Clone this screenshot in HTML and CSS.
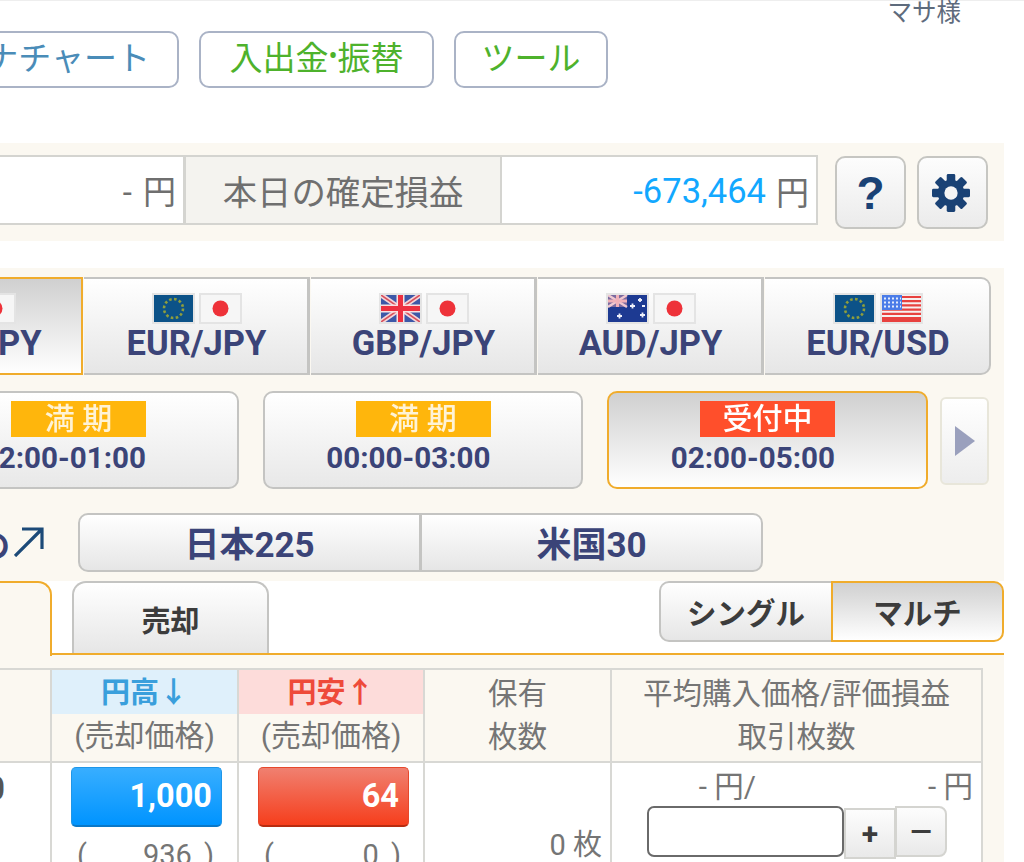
FILE: index.html
```html
<!DOCTYPE html>
<html lang="ja">
<head>
<meta charset="utf-8">
<title>取引</title>
<link rel="stylesheet" href="styles.css">
</head>
<body>
<svg class="sprite" aria-hidden="true">
  <symbol id="eu" viewBox="0 0 39 27">
    <rect width="39" height="27" fill="#0c5288"/>
    <circle cx="19.5" cy="13.5" r="9.5" fill="none" stroke="#8f9e3c" stroke-width="2.6" stroke-dasharray="2.6 2.4"/>
  </symbol>
  <symbol id="jp" viewBox="0 0 39 27">
    <rect width="39" height="27" fill="#f6f6f6"/>
    <circle cx="19.5" cy="13.5" r="8" fill="#ee3239"/>
  </symbol>
  <symbol id="uk" viewBox="0 0 39 27">
    <rect width="39" height="27" fill="#3d58a8"/>
    <path d="M0 0L39 27M39 0L0 27" stroke="#f4d5d8" stroke-width="5"/>
    <path d="M0 0L39 27M39 0L0 27" stroke="#d8505c" stroke-width="1.6"/>
    <path d="M19.5 0V27M0 13.5H39" stroke="#f8e0e0" stroke-width="8"/>
    <path d="M19.5 0V27M0 13.5H39" stroke="#ee3040" stroke-width="5"/>
  </symbol>
  <symbol id="au" viewBox="0 0 39 27">
    <rect width="39" height="27" fill="#1d3a92"/>
    <rect width="19" height="12" fill="#7a6aa0"/>
    <path d="M0 0L19 12M19 0L0 12" stroke="#f0c8d0" stroke-width="2.4"/>
    <path d="M9.5 0V12M0 6H19" stroke="#f0b0b8" stroke-width="3"/>
    <path d="M9 21h5M11.500 18.500v5M22 11h5M24.500 8.500v5M30 5h4M32 3v4M32 20h5M34.500 17.500v5M34 11h3" stroke="#eef0fa" stroke-width="1.800"/>
  </symbol>
  <symbol id="us" viewBox="0 0 39 27">
    <rect width="39" height="27" fill="#f6f0f0"/>
    <path d="M0 2H39M0 6.200H39M0 10.400H39M0 14.600H39M0 18.800H39M0 23H39" stroke="#e8413f" stroke-width="2.200"/>
    <path d="M0 25.500H39" stroke="#e8413f" stroke-width="3"/>
    <rect width="20" height="15" fill="#4a7ce8"/>
    <path d="M2 3.500H19M2 7.500H19M2 11.500H19" stroke="#e4ecfb" stroke-width="2" stroke-dasharray="2 2"/>
  </symbol>
</svg>

<div class="page">
  <header class="top">
    <div class="user">マサ様</div>
    <nav class="nav">
      <a class="nav-btn nav-chart">ナチャート</a>
      <a class="nav-btn nav-fund">入出金<span class="dot">•</span>振替</a>
      <a class="nav-btn nav-tool">ツール</a>
    </nav>
  </header>

  <section class="summary">
    <div class="stat stat-left">- 円</div>
    <div class="stat stat-label">本日の確定損益</div>
    <div class="stat stat-value"><span class="loss">-673,464</span> 円</div>
    <button class="tool-btn help">?</button>
    <button class="tool-btn">
      <svg class="gear" viewBox="0 0 40 40" aria-hidden="true">
        <g fill="#1a4275">
          <rect x="15.500" y="0" width="9" height="40" rx="1.500"/>
          <rect x="15.500" y="0" width="9" height="40" rx="1.500" transform="rotate(45 20 20)"/>
          <rect x="15.500" y="0" width="9" height="40" rx="1.500" transform="rotate(90 20 20)"/>
          <rect x="15.500" y="0" width="9" height="40" rx="1.500" transform="rotate(135 20 20)"/>
        </g>
        <circle cx="20" cy="20" r="10.500" fill="none" stroke="#1a4275" stroke-width="7"/>
        <circle cx="20" cy="20" r="7" fill="#f5f5f5"/>
      </svg>
    </button>
  </section>

  <section class="market">
    <div class="pairs">
      <div class="pair pair-on">
        <div class="flags"><svg class="flag"><use href="#us"/></svg><svg class="flag"><use href="#jp"/></svg></div>
        <div class="pair-name">USD/JPY</div>
      </div>
      <div class="pair">
        <div class="flags"><svg class="flag"><use href="#eu"/></svg><svg class="flag"><use href="#jp"/></svg></div>
        <div class="pair-name">EUR/JPY</div>
      </div>
      <div class="pair">
        <div class="flags"><svg class="flag"><use href="#uk"/></svg><svg class="flag"><use href="#jp"/></svg></div>
        <div class="pair-name">GBP/JPY</div>
      </div>
      <div class="pair">
        <div class="flags"><svg class="flag"><use href="#au"/></svg><svg class="flag"><use href="#jp"/></svg></div>
        <div class="pair-name">AUD/JPY</div>
      </div>
      <div class="pair pair-last">
        <div class="flags"><svg class="flag"><use href="#eu"/></svg><svg class="flag"><use href="#us"/></svg></div>
        <div class="pair-name">EUR/USD</div>
      </div>
    </div>

    <div class="slots">
      <div class="slot">
        <div class="badge badge-full">満 期</div>
        <div class="slot-time">22:00-01:00</div>
      </div>
      <div class="slot slot-mid">
        <div class="badge badge-full">満 期</div>
        <div class="slot-time">00:00-03:00</div>
      </div>
      <div class="slot slot-on">
        <div class="badge badge-open">受付中</div>
        <div class="slot-time">02:00-05:00</div>
      </div>
      <button class="next" aria-label="次へ">
        <svg class="next-icon" viewBox="0 0 20 30" aria-hidden="true"><polygon points="0,0 20,15 0,30" fill="#9aa0bd"/></svg>
      </button>
    </div>

    <div class="indexes">
      <div class="link">
        <span class="link-text">の</span>
        <svg class="link-arrow" viewBox="0 0 30 30" aria-hidden="true"><path d="M1 29L28 2M8 2H28V22" fill="none" stroke="#1c4a78" stroke-width="3.200"/></svg>
      </div>
      <div class="index">日本225</div>
      <div class="index index-last">米国30</div>
    </div>
  </section>

  <section class="tabs">
    <div class="tab-on"></div>
    <div class="tab">売却</div>
    <div class="modes">
      <div class="mode">シングル</div>
      <div class="mode mode-on">マルチ</div>
    </div>
  </section>

  <section class="panel">
    <div class="grid">
      <div class="head head-first"></div>
      <div class="head head-price">
        <div class="dir dir-up">円高↓</div>
        <div class="sub">(売却価格)</div>
      </div>
      <div class="head head-price">
        <div class="dir dir-down">円安↑</div>
        <div class="sub">(売却価格)</div>
      </div>
      <div class="head head-text">保有<br>枚数</div>
      <div class="head head-text">平均購入価格/評価損益<br>取引枚数</div>

      <div class="cell cell-first">0</div>
      <div class="cell cell-price">
        <div class="price price-blue">1,000</div>
        <div class="paren"><span>(</span><span class="paren-val">936</span><span>)</span></div>
      </div>
      <div class="cell cell-price">
        <div class="price price-red">64</div>
        <div class="paren"><span>(</span><span class="paren-val">0</span><span>)</span></div>
      </div>
      <div class="cell cell-qty">0 枚</div>
      <div class="cell cell-order">
        <div class="avg"><span class="avg-price">- 円/</span><span class="avg-pl">- 円</span></div>
        <div class="order">
          <div class="qty-input"></div>
          <button class="step step-plus">+</button>
          <button class="step step-minus">—</button>
        </div>
      </div>
    </div>
  </section>
</div>
</body>
</html>
```

FILE: styles.css
```css
* { box-sizing: border-box; }

html, body {
  margin: 0;
  padding: 0;
  background: #fff;
}

body {
  width: 1024px;
  height: 862px;
  overflow: hidden;
  font-family: Roboto, "Noto Sans CJK JP", sans-serif;
  color: #6f6f6f;
}

.sprite { display: none; }

.page { width: 1024px; }

button { font-family: inherit; padding: 0; }

/* header */
.top {
  height: 143px;
  border-top: 1px solid #eeeeee;
}

.user {
  height: 25px;
  padding-right: 63px;
  text-align: right;
  font-size: 24.500px;
  line-height: 24px;
  color: #5e6b7c;
}

.nav {
  display: flex;
  gap: 20px;
  margin: 5px 0 0 -20px;
}

.nav-btn {
  display: flex;
  align-items: center;
  justify-content: center;
  height: 57px;
  padding-bottom: 7px;
  border: 2px solid #aab3c6;
  border-radius: 10px;
  background: #fff;
  font-size: 33px;
  color: #4eb22c;
}

.nav-chart {
  width: 199px;
  justify-content: flex-end;
  padding-right: 27px;
  color: #4a8cb8;
}

.nav-fund { width: 235px; }
.nav-tool { width: 154px; }

.dot { font-family: Roboto, sans-serif; font-size: 27px; }

/* summary */
.summary {
  display: flex;
  align-items: flex-start;
  width: 1004px;
  height: 98px;
  padding-top: 12px;
  background: #fbf8f1;
}

.stat {
  display: flex;
  align-items: center;
  height: 70px;
  border: 2px solid #d4d4d0;
  font-size: 33px;
  color: #6f6f6f;
}

.stat-left {
  width: 206px;
  margin-left: -20px;
  justify-content: flex-end;
  padding-right: 7px;
  background: #fff;
  border-right-width: 3px;
  word-spacing: 3px;
}

.stat-label {
  width: 316px;
  justify-content: center;
  background: #f4f3ef;
  border-left: 0;
  font-size: 34.400px;
}

.stat-value {
  width: 316px;
  justify-content: flex-end;
  gap: 10px;
  padding: 2px 7px 0 0;
  background: #fff;
  border-left: 0;
}

.loss { color: #12a8ff; font-size: 34.500px; }

.tool-btn {
  display: flex;
  align-items: center;
  justify-content: center;
  width: 71px;
  height: 73px;
  margin: 1px 0 0 11px;
  border: 2px solid #c6c6c2;
  border-radius: 10px;
  background: linear-gradient(#fdfdfd, #ebebeb);
}

.help {
  margin-left: 17px;
  font-family: "Liberation Sans", sans-serif;
  font-size: 46px;
  font-weight: 700;
  color: #1a4275;
}

.gear { width: 38px; height: 38px; margin-right: 3px; filter: blur(0.6px); }

/* market */
.market {
  width: 1004px;
  height: 313px;
  margin-top: 27px;
  padding-top: 9px;
  background: #fbf8f1;
}

.pairs {
  display: flex;
  margin-left: -142px;
}

.pair {
  width: 226px;
  height: 98px;
  margin-left: 1px;
  padding: 14px 0 0 2px;
  border: 2px solid #c4c4c2;
  border-left-width: 0;
  background: linear-gradient(#ffffff, #e6e6e6);
  text-align: center;
}

.pair-on {
  width: 225px;
  margin-left: 0;
  background: linear-gradient(#d0d0d0, #ffffff);
  border-color: #f0ac2c;
}

.pair:not(.pair-on):not(.pair-last) { border-right-width: 3px; }

.pair-last {
  border-radius: 0 10px 10px 0;
}

.flags {
  display: flex;
  justify-content: center;
  gap: 4px;
  height: 31px;
}

.flag {
  width: 43px;
  height: 31px;
  border: 2px solid #e4e4e4;
  filter: blur(0.7px);
}

.pair-name {
  margin-top: -1px;
  font-size: 34.500px;
  line-height: 40px;
  font-weight: 700;
  color: #3b4478;
}

.slots {
  display: flex;
  align-items: flex-start;
  gap: 24px;
  margin: 16px 0 0 -82px;
}

.slot {
  width: 321px;
  height: 98px;
  padding-top: 8px;
  border: 2px solid #c4c4c2;
  border-radius: 10px;
  background: linear-gradient(#ffffff, #e8e8e8);
  text-align: center;
}

.slot-mid { width: 320px; }

.slot-on {
  border-color: #f0ac2c;
  background: linear-gradient(#d0d0d0, #ffffff);
}

.badge {
  width: 135px;
  height: 36px;
  margin: 0 auto;
  font-size: 30px;
  line-height: 35px;
  font-weight: 500;
  color: #fff;
  filter: blur(0.5px);
}

.badge-full { background: #ffb60c; color: #fff3d6; }
.badge-open { background: #ff4f2b; }

.slot-time {
  display: flex;
  justify-content: flex-end;
  width: 135px;
  margin: 1px auto 0;
  white-space: nowrap;
  font-size: 29.600px;
  line-height: 40px;
  font-weight: 700;
  color: #3b4478;
}

.next {
  display: flex;
  align-items: center;
  justify-content: center;
  width: 49px;
  height: 88px;
  margin: 6px 0 0 -12px;
  border: 2px solid #e8e6da;
  border-radius: 6px;
  background: linear-gradient(#ffffff, #ededed);
}

.next-icon { width: 20px; height: 30px; }

.indexes {
  display: flex;
  margin-top: 24px;
}

.link {
  display: flex;
  align-items: center;
  justify-content: flex-end;
  width: 78px;
  padding-right: 34px;
  overflow: hidden;
}

.link-text {
  flex: none;
  margin-left: -40px;
  font-size: 32px;
  font-weight: 700;
  color: #3b4478;
}

.link-arrow { flex: none; width: 30px; height: 30px; margin: -2px 0 0 4px; }

.index {
  width: 343px;
  height: 59px;
  border: 2px solid #c4c4c2;
  border-radius: 10px 0 0 10px;
  background: linear-gradient(#ffffff, #e6e6e6);
  text-align: center;
  font-size: 35px;
  line-height: 61px;
  font-weight: 700;
  color: #3b4478;
}

.index-last {
  width: 344px;
  margin-left: -2px;
  border-left-width: 3px;
  border-radius: 0 10px 10px 0;
}

/* tabs */
.tabs {
  display: flex;
  align-items: flex-start;
  width: 1004px;
  height: 74px;
  border-bottom: 2px solid #f0ac2c;
  background: #fff;
}

.tab-on {
  width: 72px;
  height: 75px;
  margin-left: -20px;
  border-top: 2px solid #f0ac2c;
  border-right: 2px solid #f0ac2c;
  border-radius: 0 14px 0 0;
  background: #fbf8f1;
}

.tab {
  width: 197px;
  height: 72px;
  margin-left: 20px;
  padding-top: 7px;
  border: 2px solid #c4c4c2;
  border-bottom: 0;
  border-radius: 14px 14px 0 0;
  background: linear-gradient(#ffffff, #e6e6e6);
  text-align: center;
  font-size: 29px;
  line-height: 64px;
  font-weight: 700;
  color: #3c3c3c;
}

.modes {
  display: flex;
  margin-left: auto;
}

.mode {
  width: 172px;
  height: 61px;
  padding-top: 2px;
  border: 2px solid #c4c4c2;
  border-right: 0;
  border-radius: 10px 0 0 10px;
  background: linear-gradient(#ffffff, #e6e6e6);
  text-align: center;
  font-size: 29.500px;
  line-height: 58px;
  font-weight: 700;
  color: #3c3c3c;
}

.mode-on {
  width: 173px;
  border: 2px solid #f0ac2c;
  border-radius: 0 10px 10px 0;
  background: linear-gradient(#d0d0d0, #ffffff);
}

/* table */
.panel {
  width: 1004px;
  height: 207px;
  padding: 13px 21px 0 0;
  background: #fbf8f1;
}

.grid {
  display: grid;
  grid-template-columns: 52px 187px 186px 187px 371px;
  grid-template-rows: 93px 110px;
  border-top: 2px solid #d8d8d4;
}

.head, .cell {
  border-right: 2px solid #d8d8d4;
}

.head { border-bottom: 2px solid #d8d8d4; background: #fbf8f1; }

.head-price { text-align: center; }

.dir {
  height: 44px;
  font-size: 29px;
  line-height: 47px;
  font-weight: 700;
}

.dir-up { background: #dff0fb; color: #3a9fdc; }
.dir-down { background: #fddcda; color: #ee4a3a; }

.sub {
  font-size: 30px;
  line-height: 44px;
  color: #757575;
}

.head-text {
  padding-top: 3px;
  text-align: center;
  font-size: 29.500px;
  line-height: 43px;
  color: #757575;
}

.cell {
  background: #fff;
  font-size: 29px;
  color: #757575;
}

.cell-first {
  overflow: hidden;
  padding-top: 8px;
  text-indent: -14px;
  font-weight: 700;
  font-size: 33px;
  line-height: 36px;
  color: #555;
}

.cell-price { padding: 4px 0 0 19px; }

.price {
  width: 151px;
  height: 60px;
  padding-right: 9px;
  border-radius: 5px;
  text-align: right;
  font-size: 32.500px;
  line-height: 57px;
  font-weight: 700;
  color: #fff;
}

.price-blue {
  border: 1px solid #1f96e8;
  border-bottom: 2px solid #0a78c8;
  background: linear-gradient(#38aeff, #0094ff);
}

.price-red {
  border: 1px solid #e6482c;
  border-bottom: 2px solid #b82c10;
  background: linear-gradient(#f08070, #f63e1c);
}

.paren {
  display: flex;
  justify-content: space-between;
  width: 151px;
  margin-top: 9px;
  padding: 0 8px 0 6px;
  line-height: 38px;
}

.paren-val { margin-left: auto; margin-right: 12px; }

.cell-qty {
  padding: 62px 8px 0 0;
  text-align: right;
  line-height: 40px;
}

.avg {
  display: flex;
  height: 43px;
  padding-top: 6px;
  font-size: 29.500px;
  line-height: 36px;
}

.avg-price { width: 144px; text-align: right; }
.avg-pl { flex: 1; padding-right: 8px; text-align: right; }

.order {
  display: flex;
  align-items: flex-start;
  margin-left: 35px;
}

.qty-input {
  width: 197px;
  height: 51px;
  border: 2px solid #6a6a6a;
  border-radius: 7px;
  background: #fff;
}

.step {
  width: 52px;
  height: 51px;
  border: 2px solid #d4d4d0;
  background: linear-gradient(#fdfdfd, #e9e9e9);
  font-size: 30px;
  line-height: 1;
  font-weight: 700;
  color: #3c3c3c;
}

.step-plus { margin-top: 2px; }

.step-minus {
  margin-left: -1px;
  border-radius: 0 8px 8px 0;
  font-size: 28px;
}
```
